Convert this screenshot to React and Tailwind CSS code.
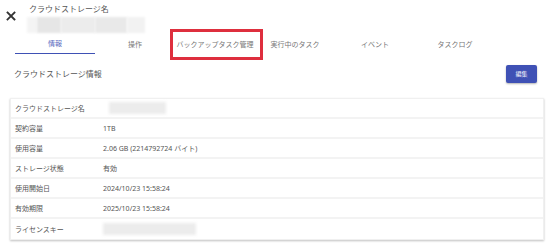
import React from "react";

const rows = [
  ["クラウドストレージ名", null, "w-[57px] ml-[6px]"],
  ["契約容量", "1TB"],
  ["使用容量", "2.06 GB (2214792724 バイト)"],
  ["ストレージ状態", "有効"],
  ["使用開始日", "2024/10/23 15:58:24"],
  ["有効期限", "2025/10/23 15:58:24"],
  ["ライセンスキー", null, "w-[93px]"],
];

const tabs = ["情報", "操作", "バックアップタスク管理", "実行中のタスク", "イベント", "タスクログ"];

export default function App() {
  return (
    <div
      className="relative w-[550px] h-[250px] bg-white overflow-hidden text-[#555]"
      style={{ fontFamily: '"Noto Sans", "Noto Sans CJK JP", sans-serif' }}
    >
      {/* header */}
      <div className="flex h-[35px]">
        <div className="w-[27px] pl-[6px] pt-[11px]">
          <svg width="10" height="10" viewBox="0 0 10 10">
            <path d="M1.5 1.5 L8.5 8.5 M8.5 1.5 L1.5 8.5" stroke="#333" strokeWidth="1.8" strokeLinecap="square" />
          </svg>
        </div>
        <div className="flex flex-col pt-[3px]">
          <div className="text-[8px] leading-[12px] text-[#555] pl-[2px]">クラウドストレージ名</div>
          <div className="mt-[2px] h-[16px] w-[118px] flex">
            <div className="w-[10px] bg-[#f4f4f4] blur-[1px]" />
            <div className="w-[24px] bg-[#e6e6e6] blur-[1px]" />
            <div className="w-[34px] bg-[#ececec] blur-[1px]" />
            <div className="w-[32px] bg-[#e9e9e9] blur-[1px]" />
            <div className="w-[18px] bg-[#f2f2f2] blur-[1px]" />
          </div>
        </div>
      </div>

      {/* tabs */}
      <div className="flex pl-[15px] h-[19px]">
        {tabs.map((t, i) => (
          <div
            key={t}
            className={
              "w-[80px] flex items-center justify-center text-[7px] leading-none pb-[1px] " +
              (i === 0 ? "text-[#5c6bc0] border-b border-[#3f51b5]" : "text-[#777]")
            }
          >
            {t}
          </div>
        ))}
      </div>

      {/* red annotation */}
      <div className="absolute left-[170px] top-[29px] w-[93px] h-[31px] border-[3px] border-[#de2f3e]" />

      {/* section heading */}
      <div className="mt-[11px] h-[18px] flex items-center justify-between pl-[14px] pr-[13px]">
        <div className="text-[8px] leading-none text-[#555]">クラウドストレージ情報</div>
        <div className="w-[31px] h-[18px] rounded-[2px] bg-[#3f51b5] shadow-[0_1px_2px_rgba(0,0,0,0.3)] flex items-center justify-center text-[6px] text-white">
          編集
        </div>
      </div>

      {/* table */}
      <div className="mt-[15px] mx-[10px] w-[534px] bg-white border border-[#f0f0f0] shadow-[0_1px_2px_rgba(0,0,0,0.25)]">
        {rows.map(([label, value, blurCls], i) => (
          <div
            key={label}
            className={
              "flex items-center h-[20px] " + (i < rows.length - 1 ? "border-b-2 border-[#f3f3f3]" : "")
            }
          >
            <div className="w-[92px] pl-[4px] text-[7px] leading-none text-[#555]">{label}</div>
            {value ? (
              <div className="text-[7px] leading-none text-[#555]">{value}</div>
            ) : (
              <div className={"h-[12px] bg-[#ececec] blur-[1.5px] " + blurCls} />
            )}
          </div>
        ))}
      </div>
    </div>
  );
}
